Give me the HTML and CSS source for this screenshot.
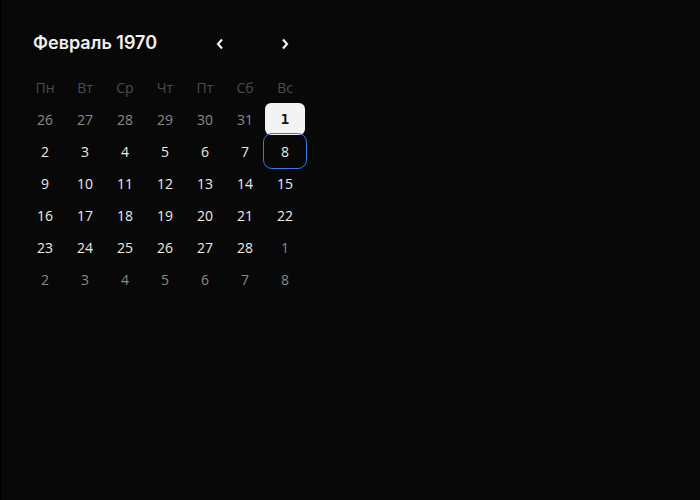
FILE: index.html
```html
<!DOCTYPE html>
<html lang="ru">
<head>
<meta charset="utf-8">
<link rel="stylesheet" href="styles.css">
</head>
<body>
<div class="cal">
  <div class="head">
    <div class="title">Февраль 1970</div>
    <div class="nav">
      <button class="navbtn" aria-label="prev"><svg width="8" height="12" viewBox="0 0 8 12"><path d="M6 1.5 L2 6 L6 10.5" fill="none" stroke="#f2f2f2" stroke-width="2.2" stroke-linejoin="miter"/></svg></button>
      <button class="navbtn" aria-label="next"><svg width="8" height="12" viewBox="0 0 8 12"><path d="M2 1.5 L6 6 L2 10.5" fill="none" stroke="#f2f2f2" stroke-width="2.2" stroke-linejoin="miter"/></svg></button>
    </div>
  </div>
  <div class="grid">
    <div class="wd">Пн</div><div class="wd">Вт</div><div class="wd">Ср</div><div class="wd">Чт</div><div class="wd">Пт</div><div class="wd">Сб</div><div class="wd">Вс</div>
    <div class="d out">26</div><div class="d out">27</div><div class="d out">28</div><div class="d out">29</div><div class="d out">30</div><div class="d out">31</div><div class="d sel">1</div>
    <div class="d">2</div><div class="d">3</div><div class="d">4</div><div class="d">5</div><div class="d">6</div><div class="d">7</div><div class="d focus">8</div>
    <div class="d">9</div><div class="d">10</div><div class="d">11</div><div class="d">12</div><div class="d">13</div><div class="d">14</div><div class="d">15</div>
    <div class="d">16</div><div class="d">17</div><div class="d">18</div><div class="d">19</div><div class="d">20</div><div class="d">21</div><div class="d">22</div>
    <div class="d">23</div><div class="d">24</div><div class="d">25</div><div class="d">26</div><div class="d">27</div><div class="d">28</div><div class="d out">1</div>
    <div class="d out">2</div><div class="d out">3</div><div class="d out">4</div><div class="d out">5</div><div class="d out">6</div><div class="d out">7</div><div class="d out">8</div>
  </div>
</div>
</body>
</html>
```
FILE: styles.css
```css
html { background: #000; }
body {
  margin: 0 0 0 1px;
  min-height: 500px;
  background: #080808;
  font-family: "Open Sans", "Noto Sans", sans-serif;
  color: #e8e8e8;
}
.cal {
  width: 280px;
  padding: 26px 0 0 24px;
}
.head {
  display: flex;
  align-items: center;
  height: 32px;
}
.title {
  padding-left: 8px;
  font-family: Inter, sans-serif;
  font-size: 18px;
  font-weight: 600;
  color: #f0f0f0;
}
.nav {
  margin-left: auto;
  display: flex;
  gap: 25px;
  padding-top: 3px;
}
.navbtn {
  width: 40px;
  height: 32px;
  padding: 0;
  border: 0;
  background: transparent;
  display: flex;
  align-items: center;
  justify-content: center;
}
.grid {
  margin-top: 13px;
  display: grid;
  grid-template-columns: repeat(7, 40px);
  grid-auto-rows: 32px;
}
.wd, .d {
  display: flex;
  align-items: center;
  justify-content: center;
  font-size: 14px;
}
.wd { color: #4d4d4d; }
.d { color: #ebebeb; }
.d.out { color: #8a8a8a; }
.d.sel {
  background: #f3f3f3;
  color: #111;
  border-radius: 6px;
  font-family: "DejaVu Sans Mono", monospace;
  font-weight: 700;
  font-size: 14px;
}
.d.focus {
  border-radius: 7px;
  outline: 1px solid #3777e8;
  outline-offset: 1px;
}
```
